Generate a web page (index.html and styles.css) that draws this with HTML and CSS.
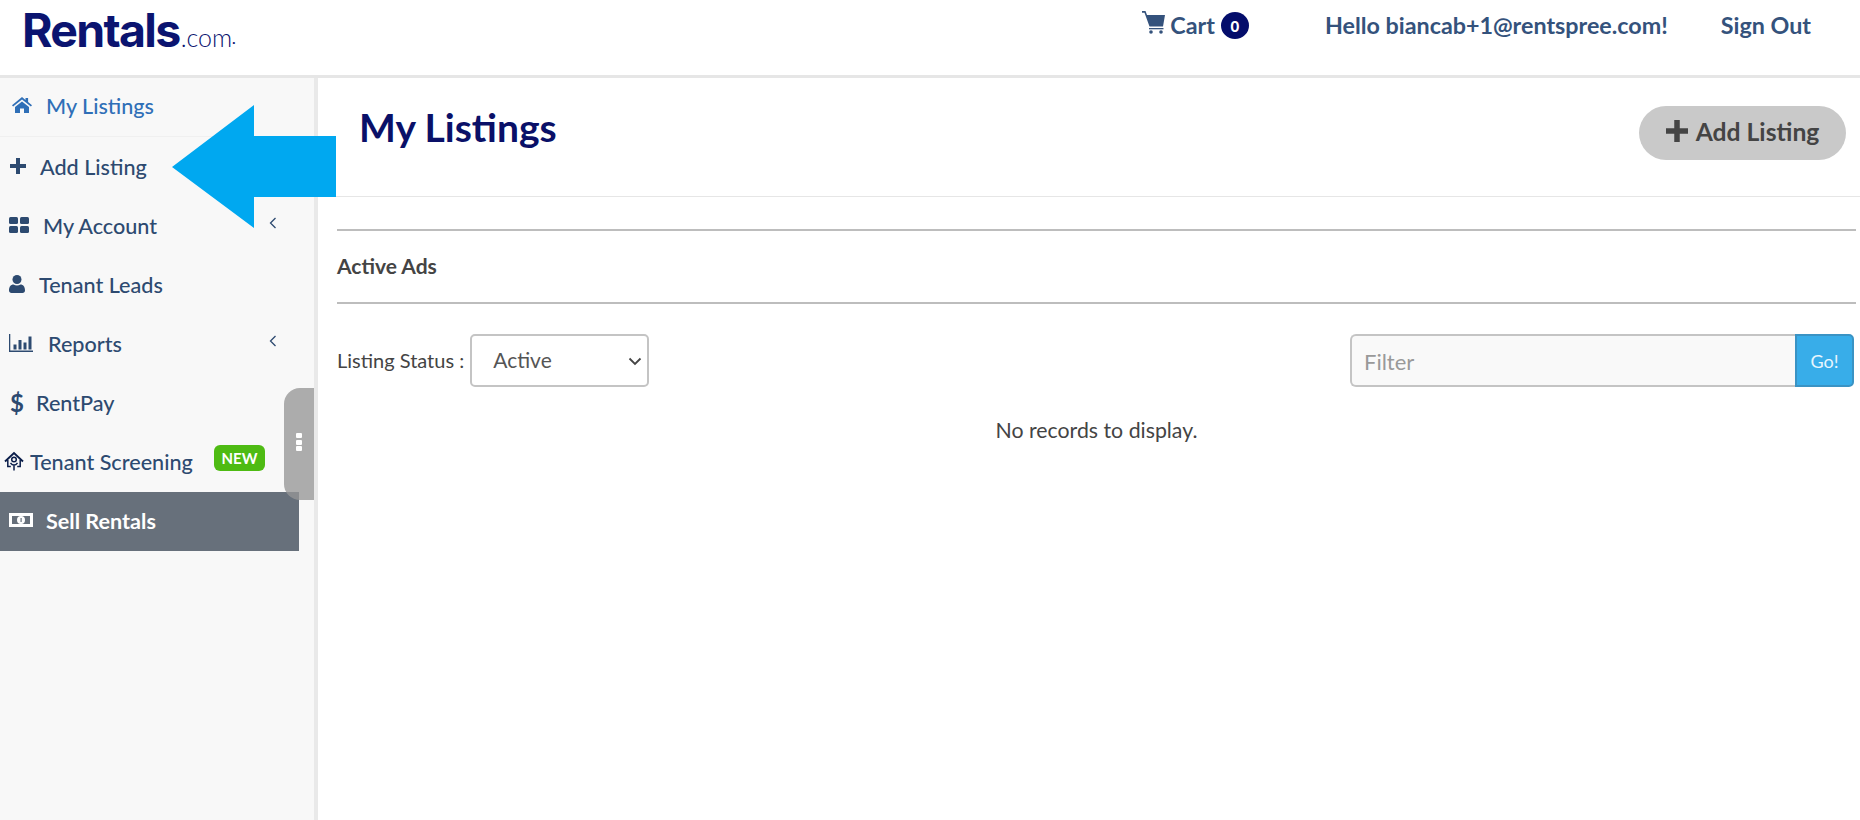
FILE: index.html
```html
<!DOCTYPE html>
<html lang="en">
<head>
<meta charset="utf-8">
<title>My Listings</title>
<link rel="stylesheet" href="styles.css">
</head>
<body>
<header class="topbar">
  <a class="logo"><span class="logo-main">Rentals</span><span class="logo-com">.com</span><span class="logo-dot">·</span></a>
  <nav class="topnav">
    <a class="cart">
      <svg class="cart-icon" viewBox="0 0 23 23"><path d="M0 0h3.500l1.500 4h18l-2 11.500H7.500L2.500 1.800H0z"/><path d="M7 17h14.500v1.300H7z"/><circle cx="9" cy="21" r="1.800"/><circle cx="19" cy="21" r="1.800"/></svg>
      <span>Cart</span><span class="badge">0</span>
    </a>
    <a class="hello">Hello biancab+1@rentspree.com!</a>
    <a class="signout">Sign Out</a>
  </nav>
</header>

<div class="layout">
  <aside class="sidebar">
    <a class="item active"><svg class="ic ic-home" viewBox="0 0 20 16"><path d="M10 0l3.500 2.900V1h2.600v4.100L20 8.300l-1.100 1.300L10 2.400 1.100 9.600 0 8.300z"/><path d="M3 10l7-5.600L17 10v6h-5v-4.500H8V16H3z"/></svg><span>My Listings</span></a>
    <a class="item"><svg class="ic ic-plus" viewBox="0 0 16 16"><path d="M6 0h4v6h6v4h-6v6H6v-6H0V6h6z"/></svg><span>Add Listing</span></a>
    <a class="item"><svg class="ic ic-grid" viewBox="0 0 20 16"><rect width="9" height="7" rx="1.500"/><rect x="11" width="9" height="7" rx="1.500"/><rect y="9" width="9" height="7" rx="1.500"/><rect x="11" y="9" width="9" height="7" rx="1.500"/></svg><span>My Account</span><svg class="chev" viewBox="0 0 8 12"><path d="M6.500 1L1.500 6l5 5"/></svg></a>
    <a class="item"><svg class="ic ic-user" viewBox="0 0 16 18"><circle cx="8" cy="4.500" r="4.500"/><path d="M0 15.500C0 11.500 2 9.500 4.500 9.500c1 .7 2.200 1.100 3.500 1.100s2.500-.4 3.500-1.100c2.500 0 4.500 2 4.500 6 0 1.600-1 2.500-2.500 2.500h-11C1 18 0 17.100 0 15.500z"/></svg><span>Tenant Leads</span></a>
    <a class="item"><svg class="ic ic-chart" viewBox="0 0 24 18"><path d="M0 0h1.300v16.500H24V18H0z"/><path d="M4.500 10.500h3v5h-3zM9.500 6h3v9.500h-3zM14.500 8.500h3v7h-3zM19.500 2.500h3v13h-3z"/></svg><span>Reports</span><svg class="chev" viewBox="0 0 8 12"><path d="M6.500 1L1.500 6l5 5"/></svg></a>
    <a class="item"><span class="ic-dollar">$</span><span>RentPay</span></a>
    <a class="item"><svg class="ic ic-house" viewBox="0 0 20 20"><path d="M1 10.500L10 2l9 8.500" stroke-width="1.900"/><path d="M3.800 9v6.500h3M16.200 9v6.500h-3" stroke-width="1.500"/><circle cx="10" cy="8.500" r="2.300" stroke-width="1.500"/><path d="M6.500 11.800c1 1.500 2.100 2.200 3.500 2.200s2.500-.7 3.500-2.200M10 14v5.500" stroke-width="1.500"/></svg><span>Tenant Screening</span><span class="new">NEW</span></a>
    <a class="item sell"><svg class="ic ic-money" viewBox="0 0 24 16"><path fill-rule="evenodd" d="M0 1h24v14H0zM3 4v8h18V4z"/><circle cx="12" cy="8" r="4"/><path class="money-mark" d="M11.500 6h1.200v4h-1.200z"/></svg><span>Sell Rentals</span></a>
    <div class="handle"><i></i><i></i><i></i></div>
  </aside>

  <main class="main">
    <section class="page-head">
      <h1>My Listings</h1>
      <a class="add-btn"><svg class="add-plus" viewBox="0 0 16 16"><path d="M6 0h4v6h6v4h-6v6H6v-6H0V6h6z"/></svg><span>Add Listing</span></a>
    </section>
    <section class="content">
      <h2 class="section-title">Active Ads</h2>
      <div class="filters">
        <div class="status">
          <label class="status-label" for="status">Listing Status :</label>
          <div class="select-wrap">
            <select id="status" class="status-select"><option>Active</option></select>
            <svg class="select-chev" viewBox="0 0 14 9"><path d="M1.500 1.500L7 7l5.500-5.500"/></svg>
          </div>
        </div>
        <div class="search">
          <input class="search-input" type="text" placeholder="Filter">
          <button class="go">Go!</button>
        </div>
      </div>
      <p class="empty">No records to display.</p>
    </section>
  </main>
</div>

<svg class="arrow" viewBox="0 0 164 123"><path d="M0 62L82 0v31h82v61H82v31z"/></svg>
</body>
</html>
```

FILE: styles.css
```css
* { box-sizing: border-box; }
html, body { margin: 0; height: 820px; overflow: hidden; }
body { font-family: "Lato", "Noto Sans", sans-serif; background: #fff; color: #444; position: relative; }

.topbar { height: 78px; border-bottom: 3px solid #e6e6e6; display: flex; justify-content: space-between; background: #fff; }
.logo { padding: 4px 0 0 22px; color: #0b1470; display: block; line-height: 52px; white-space: nowrap; }
.logo-main { font-family: "Inter", sans-serif; font-size: 46.500px; font-weight: 700; letter-spacing: -1.700px; }
.logo-com { font-family: "Lato", sans-serif; font-size: 25px; font-weight: 300; margin-left: 1px; }
.logo-dot { font-size: 14px; }

.topnav { display: flex; align-items: flex-start; padding-top: 10px; color: #34527c; font-size: 23.300px; font-weight: 700; line-height: 30px; }
.cart { display: flex; align-items: center; }
.cart-icon { width: 23px; height: 23px; fill: #34527c; margin: -6px 5px 0 0; }
.badge { width: 28px; height: 27px; border-radius: 50%; background: #040d6b; color: #fff; font-size: 15px; font-weight: 900; display: flex; align-items: center; justify-content: center; margin: 1px 0 0 6px; }
.hello { margin-left: 76px; }
.signout { margin: 0 49px 0 53px; }

.layout { display: flex; height: 742px; }
.sidebar { width: 318px; background: #f8f8f8; border-right: 4px solid #e9e9e9; position: relative; padding-right: 15px; flex: none; }
.item { height: 59px; display: flex; align-items: center; font-size: 21.600px; font-weight: 500; color: #2d4a70; position: relative; white-space: nowrap; }
.item.active { color: #2f6fb7; border-bottom: 1px solid #f0f0f0; padding-bottom: 3px; }
.item.sell { background: #67707b; color: #fff; font-weight: 700; margin-top: 1px; padding-bottom: 2px; }
.ic { flex: none; fill: currentColor; }
.ic-home { width: 20px; height: 16px; margin: -2px 14px 0 12px; }
.ic-plus { width: 16px; height: 16px; margin: -2px 14px 0 10px; }
.ic-grid { width: 20px; height: 16px; margin: -2px 14px 0 9px; }
.ic-user { width: 16px; height: 18px; margin: -2px 14px 0 9px; }
.ic-chart { width: 24px; height: 18px; margin: -2px 15px 0 9px; }
.ic-dollar { width: 14px; margin: 0 12px 0 10px; font-size: 24px; font-weight: 700; }
.ic-house { width: 20px; height: 20px; margin: -2px 6px 0 4px; fill: none; stroke: #0b1e4a; }
.ic-money { width: 24px; height: 16px; margin: -2px 13px 0 9px; }
.money-mark { fill: #67707b; }
.chev { width: 8px; height: 12px; fill: none; stroke: #2d4a70; stroke-width: 1.300; margin: -5px 0 0 0; position: absolute; left: 269px; }
.new { position: absolute; left: 214px; top: 13px; width: 51px; height: 26px; border-radius: 6px; background: #4ebb13; color: #fff; font-size: 15px; font-weight: 700; text-align: center; line-height: 26px; }
.handle { position: absolute; right: 0; top: 310px; width: 30px; height: 112px; background: rgba(150,150,150,.78); border-radius: 16px 0 0 16px; display: flex; flex-direction: column; align-items: center; justify-content: center; gap: 1.500px; padding-bottom: 4px; }
.handle i { width: 6px; height: 5px; background: #fff; border-radius: 1px; }

.main { flex: 1; min-width: 0; }
.page-head { height: 119px; border-bottom: 1px solid #e6e6e6; padding: 0 14px 0 41px; display: flex; justify-content: space-between; }
.page-head h1 { margin: 27px 0 0; font-size: 39px; line-height: 44px; font-weight: 700; color: #0a1068; }
.add-btn { margin-top: 28px; width: 207px; height: 54px; padding-bottom: 4px; border-radius: 27px; background: #c9c9c9; color: #444; font-size: 24.700px; font-weight: 700; display: flex; align-items: center; justify-content: center; gap: 8px; }
.add-plus { width: 22px; height: 22px; fill: #444; }

.content { padding: 32px 4px 0 19px; }
.section-title { margin: 0; height: 75px; border-top: 2px solid #bdbdbd; border-bottom: 2px solid #bdbdbd; font-size: 21px; font-weight: 700; line-height: 70px; color: #444; }
.filters { display: flex; justify-content: space-between; margin-top: 30px; }
.status { display: flex; align-items: center; gap: 6px; }
.status-label { font-size: 20px; color: #444; padding-bottom: 2px; }
.select-wrap { position: relative; }
.status-select { appearance: none; display: block; width: 179px; height: 53px; border: 2px solid #c4c4c4; border-radius: 5px; background: #fff; font-family: inherit; font-size: 21px; color: #555; padding: 0 0 2px 21px; }
.select-chev { position: absolute; right: 7px; top: 23px; width: 14px; height: 9px; fill: none; stroke: #444; stroke-width: 1.800; pointer-events: none; }
.search { display: flex; width: 504px; height: 53px; margin-right: 2px; }
.search-input { flex: 1; min-width: 0; border: 2px solid #c4c4c4; border-right: 0; border-radius: 6px 0 0 6px; background: #f9f9f9; font-family: inherit; font-size: 22px; padding: 2px 12px 0; }
.search-input::placeholder { color: #999; opacity: 1; }
.go { width: 59px; border: 2px solid #3a93c4; border-radius: 0 5px 5px 0; background: #38ade9; color: #e8f6fe; font-family: inherit; font-size: 18px; padding: 0; }
.empty { margin: 29px 0 0; text-align: center; font-size: 21.300px; line-height: 28px; color: #444; }

.arrow { position: absolute; left: 172px; top: 105px; width: 164px; height: 123px; fill: #00a8f0; }
```
